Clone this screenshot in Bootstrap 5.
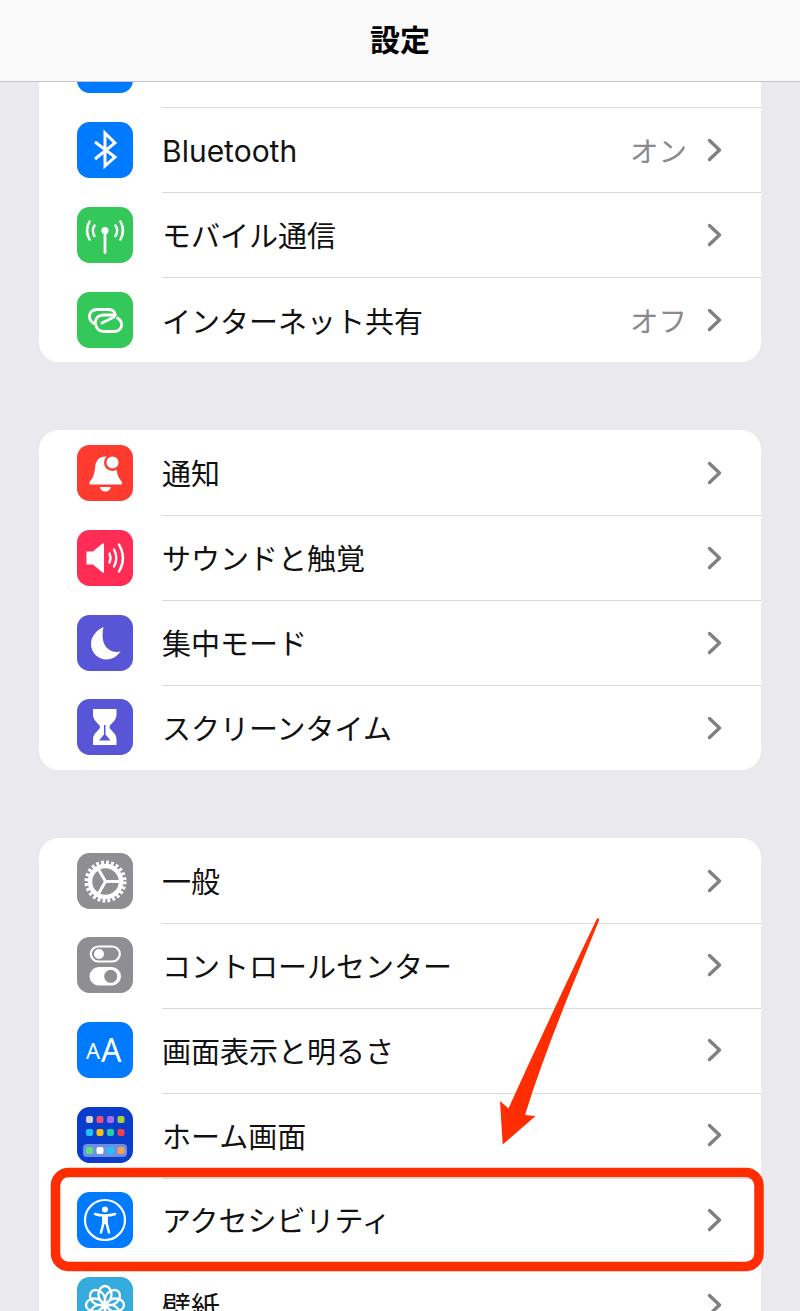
<!DOCTYPE html>
<html lang="ja">
<head>
  <meta charset="UTF-8" />
  <meta name="viewport" content="width=device-width, initial-scale=1.0" />
  <title>設定</title>
  <link href="https://cdn.jsdelivr.net/npm/bootstrap@5.3.3/dist/css/bootstrap.min.css" rel="stylesheet" />
  <style>
    html, body { height: 100%; }
    body {
      background: #e9e9ee;
      color: #111;
      font-family: "Inter", "Noto Sans CJK JP", sans-serif;
      overflow: hidden;
    }
    .phone { height: 1311px; overflow: hidden; }
    .top-bar {
      height: 82px;
      flex: none;
      padding: 0 0 5px;
      background: #f9f9f9;
      border-bottom: 1px solid #c4c4c6;
    }
    .top-title { font-family: "Noto Sans CJK JP", sans-serif; font-size: 30px; font-weight: 700; color: #000; }
    .groups { padding: 0 39px; gap: 68.4px; }
    .group-box { background: #fff; border-radius: 20px; flex: none; }
    .group-open { border-radius: 0 0 20px 20px; }
    .set-row { height: 84.85px; padding-left: 38px; }
    .set-row:last-child .row-body { border-bottom: 0; }
    .row-stub { height: 25.5px; overflow: hidden; align-items: flex-end; }
    .row-icon { width: 56px; height: 56px; border-radius: 12.5px; flex: none; margin-right: 29px; align-self: center; }
    .row-stub .row-icon { align-self: flex-end; margin-bottom: 15px; }
    .row-icon svg { display: block; width: 56px; height: 56px; }
    .row-body {
      height: calc(100% + 1px);
      padding-right: 39px;
      border-bottom: 1.5px solid #dadadc;
      font-family: "Noto Sans CJK JP", sans-serif;
      font-size: 29px;
      font-weight: 400;
      line-height: 1;
    }
    .row-stub .row-body { height: 100%; }
    .row-label-latin { font-family: "Inter", sans-serif; font-size: 30px; font-weight: 400; padding-top: 3px; }
    .row-value { color: #8a8a8e; margin-right: 20px; font-size: 28.5px; }
    .chev { width: 15px; height: 24px; flex: none; }
    .ic-blue { background: #007aff; }
    .ic-green { background: #34c759; }
    .ic-red { background: #ff3b30; }
    .ic-pink { background: #ff2d55; }
    .ic-indigo { background: #5856d6; }
    .ic-gray { background: #8e8e93; }
    .ic-navy { background: #0a3dcb; }
    .ic-teal { background: #35aadd; }
    .aa-glyph { font-family: "Noto Sans", sans-serif; font-weight: 400; color: #fff; line-height: 1; padding: 0 0 0 9px; height: 56px; }
    .aa-small { font-size: 22px; margin-right: 1px; }
    .aa-big { font-size: 32px; }
    .marks { position: absolute; left: 0; top: 0; width: 800px; height: 1311px; pointer-events: none; }
  </style>
</head>
<body>
  <div class="phone d-flex flex-column position-relative">
    <nav class="navbar top-bar justify-content-center">
      <span class="top-title">設定</span>
    </nav>

    <main class="groups d-flex flex-column">
      <section class="group-box group-open">
        <div class="set-row row-stub d-flex">
          <div class="row-icon ic-blue"></div>
          <div class="row-body flex-grow-1"></div>
        </div>
        <div class="set-row d-flex">
          <div class="row-icon ic-blue">
            <svg viewBox="0 0 56 56" fill="none" stroke="#fff" stroke-width="3"><path d="M18 20 38 35 28 44V11L38 21 18 37"/></svg>
          </div>
          <div class="row-body flex-grow-1 d-flex align-items-center">
            <span class="row-label-latin flex-grow-1">Bluetooth</span>
            <span class="row-value">オン</span>
            <svg class="chev" viewBox="0 0 15 24" fill="none" stroke="#808084" stroke-width="3.4" stroke-linecap="round" stroke-linejoin="round"><path d="M2.5 2.5 12.5 12 2.5 21.5"/></svg>
          </div>
        </div>
        <div class="set-row d-flex">
          <div class="row-icon ic-green">
            <svg viewBox="0 0 56 56" fill="none" stroke="#fff" stroke-width="2.6" stroke-linecap="round"><circle cx="28" cy="23.5" r="3.6" fill="#fff" stroke="none"/><path d="M28 25V45.5" stroke-width="2.8"/><path d="M17.5 18.5C15.5 21.5 15.5 26 17.5 29M38.5 18.5C40.5 21.5 40.5 26 38.5 29M12.5 14.5C9.5 20 9.5 27 12.5 32.5M43.5 14.5C46.5 20 46.5 27 43.5 32.5"/></svg>
          </div>
          <div class="row-body flex-grow-1 d-flex align-items-center">
            <span class="flex-grow-1">モバイル通信</span>
            <svg class="chev" viewBox="0 0 15 24" fill="none" stroke="#808084" stroke-width="3.4" stroke-linecap="round" stroke-linejoin="round"><path d="M2.5 2.5 12.5 12 2.5 21.5"/></svg>
          </div>
        </div>
        <div class="set-row d-flex">
          <div class="row-icon ic-green">
            <svg viewBox="0 0 56 56" fill="none" stroke="#fff" stroke-width="2.8" stroke-linecap="round"><path d="M16.500 31.500C10.500 27 11 18 20 17.500H31C38 17.500 40 23 36 25.500L25 31"/><path d="M38 23H27C21 23 17.500 27 18.500 32 19.500 37 23 39.500 27 39.500H37C45 39.500 47.500 30.500 40.500 26"/></svg>
          </div>
          <div class="row-body flex-grow-1 d-flex align-items-center">
            <span class="flex-grow-1">インターネット共有</span>
            <span class="row-value">オフ</span>
            <svg class="chev" viewBox="0 0 15 24" fill="none" stroke="#808084" stroke-width="3.4" stroke-linecap="round" stroke-linejoin="round"><path d="M2.5 2.5 12.5 12 2.5 21.5"/></svg>
          </div>
        </div>
      </section>

      <section class="group-box">
        <div class="set-row d-flex">
          <div class="row-icon ic-red">
            <svg viewBox="0 0 56 56" fill="#fff"><path d="M28.500 11.500C21 11.500 18.500 17 18 23 17.500 30 15.500 33.500 12.500 37V39.500H45V37C42 33.500 40 30 39.500 23 39 17 36 11.500 28.500 11.500Z"/><circle cx="35.500" cy="17.500" r="8.500" fill="#ff3b30"/><circle cx="35.500" cy="17.500" r="6"/><path d="M22.700 42H34C33 45 31 46.500 28.300 46.500 25.700 46.500 23.700 45 22.700 42Z"/></svg>
          </div>
          <div class="row-body flex-grow-1 d-flex align-items-center">
            <span class="flex-grow-1">通知</span>
            <svg class="chev" viewBox="0 0 15 24" fill="none" stroke="#808084" stroke-width="3.4" stroke-linecap="round" stroke-linejoin="round"><path d="M2.5 2.5 12.5 12 2.5 21.5"/></svg>
          </div>
        </div>
        <div class="set-row d-flex">
          <div class="row-icon ic-pink">
            <svg viewBox="0 0 56 56" fill="none" stroke="#fff" stroke-width="2.4" stroke-linecap="round"><path d="M9.500 21.500H16L25.500 13.500C26.500 12.800 27 13.300 27 14.500V41.500C27 42.700 26.500 43.200 25.500 42.500L16 34.500H9.500Z" fill="#fff" stroke="none"/><path d="M32.500 23.500C33.800 26.500 33.800 29.500 32.500 32.500M37 19.500C40 24.500 40 31.500 37 36.500M42 14.500C47 23 47 33 42 41.500"/></svg>
          </div>
          <div class="row-body flex-grow-1 d-flex align-items-center">
            <span class="flex-grow-1">サウンドと触覚</span>
            <svg class="chev" viewBox="0 0 15 24" fill="none" stroke="#808084" stroke-width="3.4" stroke-linecap="round" stroke-linejoin="round"><path d="M2.5 2.5 12.5 12 2.5 21.5"/></svg>
          </div>
        </div>
        <div class="set-row d-flex">
          <div class="row-icon ic-indigo">
            <svg viewBox="0 0 56 56" fill="#fff"><path d="M26.500 12C20 15 14 21 14 29 14 37.500 21 44.500 29.500 44.500 35 44.500 40 41.500 43.500 36.500 32 39 22.500 30 26.500 12Z"/></svg>
          </div>
          <div class="row-body flex-grow-1 d-flex align-items-center">
            <span class="flex-grow-1">集中モード</span>
            <svg class="chev" viewBox="0 0 15 24" fill="none" stroke="#808084" stroke-width="3.4" stroke-linecap="round" stroke-linejoin="round"><path d="M2.5 2.5 12.5 12 2.5 21.5"/></svg>
          </div>
        </div>
        <div class="set-row d-flex">
          <div class="row-icon ic-indigo">
            <svg viewBox="0 0 56 56"><path fill="#fff" d="M16 10H39.500V16C39.500 22 32.500 25 32.500 28 32.500 31 39.500 34 39.500 40V46H16V40C16 34 23 31 23 28 23 25 16 22 16 16Z"/><path fill="#5856d6" d="M27 26H28.500V35.500L33.500 41.500H22L27 35.500Z"/></svg>
          </div>
          <div class="row-body flex-grow-1 d-flex align-items-center">
            <span class="flex-grow-1">スクリーンタイム</span>
            <svg class="chev" viewBox="0 0 15 24" fill="none" stroke="#808084" stroke-width="3.4" stroke-linecap="round" stroke-linejoin="round"><path d="M2.5 2.5 12.5 12 2.5 21.5"/></svg>
          </div>
        </div>
      </section>

      <section class="group-box">
        <div class="set-row d-flex">
          <div class="row-icon ic-gray">
            <svg viewBox="0 0 56 56" fill="none" stroke="#fff"><circle cx="28.500" cy="28.500" r="15.500" stroke-width="4.500"/><circle cx="28.500" cy="28.500" r="18" stroke-width="6" stroke-dasharray="2.700 2.012"/><path d="M28.500 28.500H44M28.500 28.500 21 15.500M28.500 28.500 21 41.500" stroke-width="3"/></svg>
          </div>
          <div class="row-body flex-grow-1 d-flex align-items-center">
            <span class="flex-grow-1">一般</span>
            <svg class="chev" viewBox="0 0 15 24" fill="none" stroke="#808084" stroke-width="3.4" stroke-linecap="round" stroke-linejoin="round"><path d="M2.5 2.5 12.5 12 2.5 21.5"/></svg>
          </div>
        </div>
        <div class="set-row d-flex">
          <div class="row-icon ic-gray">
            <svg viewBox="0 0 56 56" fill="none"><rect x="13.800" y="9.500" width="29" height="15" rx="7.500" stroke="#fff" stroke-width="2.200"/><circle cx="22" cy="17" r="5" fill="#fff"/><rect x="12.500" y="30" width="31.500" height="18.500" rx="9.250" fill="#fff"/><circle cx="33.700" cy="39.300" r="6.500" fill="#8e8e93"/></svg>
          </div>
          <div class="row-body flex-grow-1 d-flex align-items-center">
            <span class="flex-grow-1">コントロールセンター</span>
            <svg class="chev" viewBox="0 0 15 24" fill="none" stroke="#808084" stroke-width="3.4" stroke-linecap="round" stroke-linejoin="round"><path d="M2.5 2.5 12.5 12 2.5 21.5"/></svg>
          </div>
        </div>
        <div class="set-row d-flex">
          <div class="row-icon ic-blue aa-glyph d-flex align-items-center">
            <span class="aa-small">A</span><span class="aa-big">A</span>
          </div>
          <div class="row-body flex-grow-1 d-flex align-items-center">
            <span class="flex-grow-1">画面表示と明るさ</span>
            <svg class="chev" viewBox="0 0 15 24" fill="none" stroke="#808084" stroke-width="3.4" stroke-linecap="round" stroke-linejoin="round"><path d="M2.5 2.5 12.5 12 2.5 21.5"/></svg>
          </div>
        </div>
        <div class="set-row d-flex">
          <div class="row-icon ic-navy">
            <svg viewBox="0 0 56 56">
              <rect x="9" y="9" width="7" height="7" rx="2" fill="#d5d5d5"/><rect x="19.500" y="9" width="7" height="7" rx="2" fill="#f2506e"/><rect x="30" y="9" width="7" height="7" rx="2" fill="#a86bf5"/><rect x="40.500" y="9" width="7" height="7" rx="2" fill="#a8d13c"/>
              <rect x="9" y="22" width="7" height="7" rx="2" fill="#22c3f5"/><rect x="19.500" y="22" width="7" height="7" rx="2" fill="#f7c20e"/><rect x="30" y="22" width="7" height="7" rx="2" fill="#25cfa0"/><rect x="40.500" y="22" width="7" height="7" rx="2" fill="#f0404a"/>
              <rect x="6" y="37" width="44" height="13" rx="4" fill="#6f8fe6"/>
              <rect x="9" y="40" width="7" height="7" rx="2" fill="#5ee07c"/><rect x="19.500" y="40" width="7" height="7" rx="2" fill="#fff"/><rect x="30" y="40" width="7" height="7" rx="2" fill="#22c3f5"/><rect x="40.500" y="40" width="7" height="7" rx="2" fill="#f7a04e"/>
            </svg>
          </div>
          <div class="row-body flex-grow-1 d-flex align-items-center">
            <span class="flex-grow-1">ホーム画面</span>
            <svg class="chev" viewBox="0 0 15 24" fill="none" stroke="#808084" stroke-width="3.4" stroke-linecap="round" stroke-linejoin="round"><path d="M2.5 2.5 12.5 12 2.5 21.5"/></svg>
          </div>
        </div>
        <div class="set-row d-flex">
          <div class="row-icon ic-blue">
            <svg viewBox="0 0 56 56" fill="none" stroke="#fff"><circle cx="28" cy="28" r="20" stroke-width="2.200"/><circle cx="28" cy="17.500" r="3" fill="#fff" stroke="none"/><path d="M18 22C23 24 33 24 38 22M26.500 31 24 40.500M29.500 31 32 40.500" stroke-width="2.600" stroke-linecap="round"/><path d="M25 23.500H31L30.800 32H25.200Z" fill="#fff" stroke="none"/></svg>
          </div>
          <div class="row-body flex-grow-1 d-flex align-items-center">
            <span class="flex-grow-1">アクセシビリティ</span>
            <svg class="chev" viewBox="0 0 15 24" fill="none" stroke="#808084" stroke-width="3.4" stroke-linecap="round" stroke-linejoin="round"><path d="M2.5 2.5 12.5 12 2.5 21.5"/></svg>
          </div>
        </div>
        <div class="set-row d-flex">
          <div class="row-icon ic-teal">
            <svg viewBox="0 0 56 56" fill="none" stroke="#fff" stroke-width="2.400">
              <circle cx="28" cy="28" r="3.500" fill="#fff" stroke="none"/>
              <ellipse cx="28" cy="17.500" rx="6.500" ry="8.500"/>
              <ellipse cx="28" cy="17.500" rx="6.500" ry="8.500" transform="rotate(45 28 28)"/>
              <ellipse cx="28" cy="17.500" rx="6.500" ry="8.500" transform="rotate(90 28 28)"/>
              <ellipse cx="28" cy="17.500" rx="6.500" ry="8.500" transform="rotate(135 28 28)"/>
              <ellipse cx="28" cy="17.500" rx="6.500" ry="8.500" transform="rotate(180 28 28)"/>
              <ellipse cx="28" cy="17.500" rx="6.500" ry="8.500" transform="rotate(225 28 28)"/>
              <ellipse cx="28" cy="17.500" rx="6.500" ry="8.500" transform="rotate(270 28 28)"/>
              <ellipse cx="28" cy="17.500" rx="6.500" ry="8.500" transform="rotate(315 28 28)"/>
            </svg>
          </div>
          <div class="row-body flex-grow-1 d-flex align-items-center">
            <span class="flex-grow-1">壁紙</span>
            <svg class="chev" viewBox="0 0 15 24" fill="none" stroke="#808084" stroke-width="3.4" stroke-linecap="round" stroke-linejoin="round"><path d="M2.5 2.5 12.5 12 2.5 21.5"/></svg>
          </div>
        </div>
      </section>
    </main>

    <svg class="marks" viewBox="0 0 800 1311" fill="none">
      <rect x="55.500" y="1172.500" width="703.500" height="94" rx="13" stroke="#ff2d00" stroke-width="9.500"/>
      <path fill="#ff2d00" d="M596.500 919.500C597.500 917.500 599.500 918 599 920.500 575 980 545 1050 525 1115L535.500 1116 502.700 1144.500 500 1101 508.500 1108.500C535 1050 570 975 596.500 919.500Z"/>
    </svg>
  </div>
  <script src="https://cdn.jsdelivr.net/npm/bootstrap@5.3.3/dist/js/bootstrap.bundle.min.js"></script>
</body>
</html>
